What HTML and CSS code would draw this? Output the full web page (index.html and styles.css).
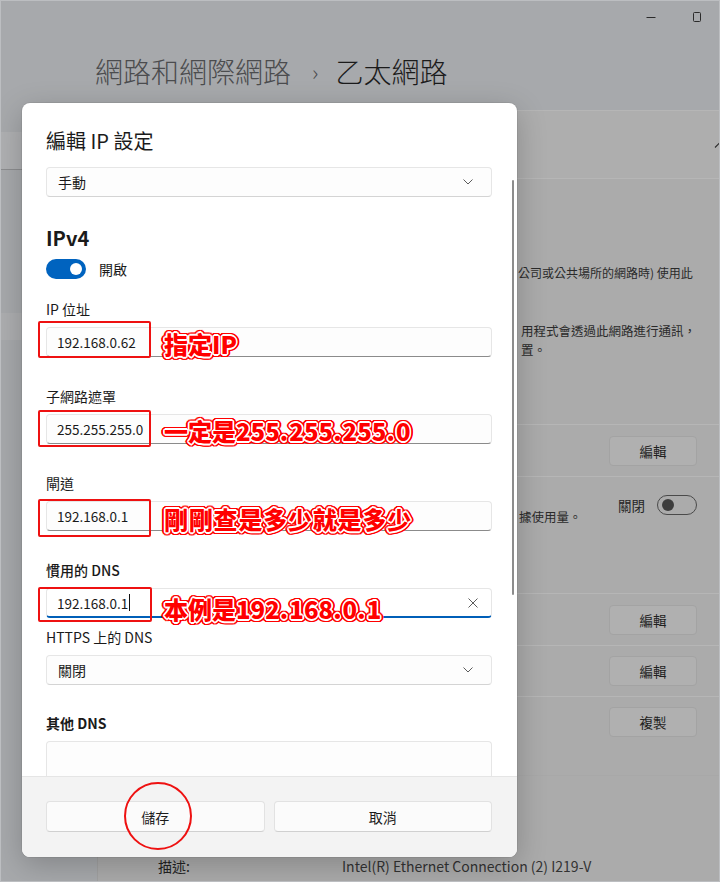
FILE: index.html
```html
<!DOCTYPE html>
<html lang="zh-Hant-TW">
<head>
  <meta charset="UTF-8">
  <meta name="viewport" content="width=device-width, initial-scale=1.0">
  <title>乙太網路</title>
  <link rel="stylesheet" href="styles.css">
</head>
<body>

<div class="window">
  <div class="titlebar">
    <svg class="ctl" width="12" height="12" viewBox="0 0 12 12"><path d="M1.5 6.5h9" stroke="#2b2b2b" stroke-width="1"/></svg>
    <svg class="ctl" width="12" height="12" viewBox="0 0 12 12"><rect x="2.5" y="1.5" width="7" height="9" rx="1" fill="none" stroke="#2b2b2b" stroke-width="1"/></svg>
  </div>

  <div class="page-head">
    <h1><span class="crumb">網路和網際網路</span><span class="sep">›</span><span class="current">乙太網路</span></h1>
  </div>

  <div class="main">
    <nav class="nav">
      <div class="search"></div>
      <div class="nav-item"></div>
    </nav>

    <div class="content">
      <div class="expander">
        <div class="expander-head">
          <svg class="chev-up" width="12" height="8" viewBox="0 0 12 8"><path d="M1 6.5l5-5 5 5" fill="none" stroke="#2b2b2b" stroke-width="1.1"/></svg>
        </div>
        <div class="expander-body">
          <div class="desc desc-top">公司或公共場所的網路時) 使用此</div>
          <div class="desc desc-mid">用程式會透過此網路進行通訊，</div>
          <div class="desc desc-end">置。</div>
        </div>
      </div>

      <div class="row"><button class="bg-btn">編輯</button></div>

      <div class="row row-tall">
        <div class="row-text">
          <div class="desc">據使用量。</div>
        </div>
        <div class="metered">
          <span>關閉</span>
          <span class="switch-off"></span>
        </div>
      </div>

      <div class="row"><button class="bg-btn">編輯</button></div>
      <div class="row row-s"><button class="bg-btn">編輯</button></div>
      <div class="row row-s"><button class="bg-btn">複製</button></div>

      <div class="props">
        <span class="prop-key">描述:</span>
        <span class="prop-val">Intel(R) Ethernet Connection (2) I219-V</span>
      </div>
    </div>
  </div>

  <!-- 編輯 IP 設定 對話方塊 -->
  <div class="dialog">
    <div class="dialog-body">
      <h2 class="dialog-title">編輯 IP 設定</h2>
      <div class="box select select-mode">
        <span>手動</span>
        <svg class="chev" width="12" height="8" viewBox="0 0 12 8"><path d="M1.5 1.5l4.5 4.5 4.5-4.5" fill="none" stroke="#5c5c5c" stroke-width="1"/></svg>
      </div>

      <h3 class="section">IPv4</h3>
      <div class="toggle-row">
        <span class="toggle"></span>
        <span>開啟</span>
      </div>

      <div class="field field-first">
        <div class="label">IP 位址</div>
        <div class="box input">
          <span>192.168.0.62</span>
          <span class="mark mark-ip"></span>
          <span class="note note-ip">指定IP</span>
        </div>
      </div>

      <div class="field">
        <div class="label">子網路遮罩</div>
        <div class="box input">
          <span>255.255.255.0</span>
          <span class="mark mark-mask"></span>
          <span class="note note-mask">一定是255<i>.</i>255<i>.</i>255<i>.</i>0</span>
        </div>
      </div>

      <div class="field">
        <div class="label">閘道</div>
        <div class="box input">
          <span>192.168.0.1</span>
          <span class="mark mark-gw"></span>
          <span class="note note-gw">剛剛查是多少就是多少</span>
        </div>
      </div>

      <div class="field">
        <div class="label label-medium">慣用的 DNS</div>
        <div class="box input focus">
          <span>192.168.0.1</span><span class="caret"></span>
          <svg class="clear" width="12" height="12" viewBox="0 0 12 12"><path d="M1.5 1.5l9 9M10.5 1.5l-9 9" stroke="#5c5c5c" stroke-width="1"/></svg>
          <span class="mark mark-dns"></span>
          <span class="note note-dns">本例是192<i>.</i>168<i>.</i>0<i>.</i>1</span>
        </div>
      </div>

      <div class="field field-tight">
        <div class="label">HTTPS 上的 DNS</div>
        <div class="box select">
          <span>關閉</span>
          <svg class="chev" width="12" height="8" viewBox="0 0 12 8"><path d="M1.5 1.5l4.5 4.5 4.5-4.5" fill="none" stroke="#5c5c5c" stroke-width="1"/></svg>
        </div>
      </div>

      <div class="field field-other">
        <div class="label label-strong">其他 DNS</div>
        <div class="box input input-cut"></div>
      </div>

      <span class="scrollbar"></span>
    </div>

    <div class="dialog-foot">
      <button class="btn">儲存<span class="circle"></span></button>
      <button class="btn">取消</button>
    </div>
  </div>
</div>

</body>
</html>
```

FILE: styles.css
```css
body {
    margin: 0;
    font-family: "Noto Sans CJK TC", "Noto Sans", sans-serif;
    background-color: #a7a9ac;
    color: #1a1a1a;
}

.window {
    position: relative;
    width: 720px;
    height: 882px;
    overflow: hidden;
    box-sizing: border-box;
    border: 1px solid #bcbec1;
}

/* 背景視窗 */
.titlebar {
    height: 31px;
    display: flex;
    justify-content: flex-end;
    align-items: center;
    gap: 34px;
    padding-right: 16px;
}

.ctl {
    display: block;
}

.page-head {
    height: 78px;
    display: flex;
    align-items: center;
    padding-left: 94px;
}

.page-head h1 {
    margin: 0;
    font-size: 28px;
    font-weight: 300;
    line-height: 40px;
    display: flex;
    align-items: center;
}

.crumb {
    color: #4b4c4e;
}

.sep {
    color: #4b4c4e;
    font-size: 22px;
    margin: 0 17px 0 21px;
}

.current {
    color: #1b1b1b;
}

.main {
    display: flex;
}

.nav {
    width: 96px;
    flex: none;
}

.search {
    margin-top: 22px;
    height: 37px;
    background-color: #afb0b2;
    border-bottom: 1px solid #8c8d8f;
}

.nav-item {
    margin-top: 143px;
    height: 27px;
    background-color: #adaeb0;
}

.content {
    flex: 1;
    background-color: #ababab;
    border-top: 1px solid #b6b6b6;
    border-left: 1px solid #a1a1a1;
    font-size: 14px;
    color: #262626;
}

.expander-head {
    height: 67px;
    background-color: #aeaeae;
    border-bottom: 1px solid #b6b6b6;
    display: flex;
    justify-content: flex-end;
    align-items: center;
}

.chev-up {
    margin-right: -7px;
}

/* 只留對話方塊右側露出的文字 */
.expander-body {
    height: 245px;
    box-sizing: border-box;
    padding-top: 84px;
    padding-left: 420px;
}

.desc {
    font-size: 12.5px;
    line-height: 19px;
    white-space: nowrap;
    color: #2a2a2a;
}

.desc-top {
    font-size: 12px;
}

.desc-mid {
    margin-top: 39px;
    padding-left: 3px;
}

.desc-end {
    padding-left: 3px;
}

.row {
    height: 52px;
    box-sizing: border-box;
    border-top: 1px solid #b6b6b6;
    display: flex;
    justify-content: flex-end;
    align-items: center;
    padding-right: 22px;
}

.row-s {
    height: 51px;
}

.row-tall {
    height: 117px;
    justify-content: space-between;
    align-items: flex-start;
}

.row-text {
    padding-top: 30px;
    padding-left: 421px;
}

.metered {
    display: flex;
    align-items: center;
    gap: 12px;
    padding-top: 18px;
    font-size: 13.5px;
}

.switch-off {
    position: relative;
    width: 40px;
    height: 20px;
    box-sizing: border-box;
    border: 1px solid #4a4a4a;
    border-radius: 10px;
}

.switch-off::after {
    content: "";
    position: absolute;
    left: 4px;
    top: 3px;
    width: 12px;
    height: 12px;
    border-radius: 50%;
    background-color: #3d3d3d;
}

.bg-btn {
    width: 88px;
    height: 30px;
    font-family: inherit;
    font-size: 13.5px;
    color: #1f1f1f;
    background-color: #b0b0b0;
    border: 1px solid #a3a3a3;
    border-radius: 4px;
}

.props {
    margin-top: 28px;
    height: 140px;
    border-top: 1px solid #a8a8a8;
    padding: 80px 0 0 60px;
    display: flex;
    font-size: 14px;
    line-height: 20px;
    color: #222;
}

.prop-key {
    width: 184px;
}

.prop-val {
    white-space: nowrap;
    color: #333;
}

/* 對話方塊 */
.dialog {
    position: absolute;
    left: 21px;
    top: 102px;
    width: 495px;
    height: 754px;
    background-color: #fff;
    border-radius: 8px;
    box-shadow: 0 8px 30px rgba(0,0,0,0.22), 0 0 0 1px rgba(0,0,0,0.06);
    display: flex;
    flex-direction: column;
    overflow: hidden;
}

.dialog-body {
    position: relative;
    flex: 1;
    min-height: 0;
    overflow: hidden;
    padding: 24px 25px 0 24px;
}

.dialog-title {
    margin: 0;
    font-size: 20px;
    font-weight: 400;
    line-height: 28px;
    color: #1b1b1b;
}

.box {
    position: relative;
    height: 30px;
    box-sizing: border-box;
    border: 1px solid #e6e6e6;
    border-radius: 4px;
    background-color: #fdfdfd;
    display: flex;
    align-items: center;
    padding: 0 10px;
    font-size: 14px;
}

.select {
    padding-left: 11px;
    justify-content: space-between;
    border-bottom-color: #d4d4d4;
}

.select-mode {
    margin-top: 12px;
}

.chev {
    margin-right: 7px;
}

.input {
    border-bottom-color: #8b8b8b;
    font-size: 13.5px;
}

.input.focus {
    background-color: #fff;
    border-bottom: 2px solid #005fb8;
}

/* 被頁尾蓋住的輸入框 */
.input-cut {
    height: 44px;
}

.caret {
    width: 1px;
    height: 17px;
    margin-left: 1px;
    background-color: #111;
}

.clear {
    position: absolute;
    right: 12px;
    top: 8px;
}

.section {
    margin: 27px 0 0;
    font-size: 20px;
    font-weight: 600;
    line-height: 28px;
}

.toggle-row {
    margin-top: 7px;
    display: flex;
    align-items: center;
    gap: 13px;
    font-size: 14px;
    height: 20px;
}

.toggle {
    position: relative;
    width: 40px;
    height: 20px;
    border-radius: 10px;
    background-color: #0063bf;
}

.toggle::after {
    content: "";
    position: absolute;
    right: 4px;
    top: 4px;
    width: 12px;
    height: 12px;
    border-radius: 50%;
    background-color: #fff;
}

.field {
    margin-top: 29px;
}

.field-first {
    margin-top: 20px;
}

.field-tight {
    margin-top: 9px;
}

.field-other {
    margin-top: 28px;
}

.label {
    font-size: 14px;
    line-height: 20px;
    margin-bottom: 8px;
}

.label-medium {
    font-weight: 500;
}

.label-strong {
    font-weight: 600;
}

.scrollbar {
    position: absolute;
    left: 490px;
    top: 77px;
    width: 2px;
    height: 415px;
    border-radius: 1px;
    background-color: #8c8c8c;
}

/* 紅色標註 */
.mark {
    position: absolute;
    left: -9px;
    width: 109px;
    border: 2px solid #ee1111;
    border-radius: 2px;
}

.mark-ip {
    top: -7px;
    height: 33px;
}

.mark-mask {
    top: -5px;
    height: 33px;
}

.mark-gw {
    top: -3px;
    height: 34px;
}

.mark-dns {
    top: -2px;
    height: 31px;
    width: 110px;
}

.note {
    position: absolute;
    left: 117px;
    z-index: 2;
    font-size: 24px;
    font-weight: 900;
    line-height: 30px;
    white-space: nowrap;
    color: #ff0000;
    text-shadow:
        1.6px 0 #fff, -1.6px 0 #fff, 0 1.6px #fff, 0 -1.6px #fff,
        1.2px 1.2px #fff, -1.2px 1.2px #fff, 1.2px -1.2px #fff, -1.2px -1.2px #fff,
        3.4px 0 #f00, -3.4px 0 #f00, 0 3.4px #f00, 0 -3.4px #f00,
        2.4px 2.4px #f00, -2.4px 2.4px #f00, 2.4px -2.4px #f00, -2.4px -2.4px #f00,
        3.1px 1.3px #f00, -3.1px 1.3px #f00, 3.1px -1.3px #f00, -3.1px -1.3px #f00,
        1.3px 3.1px #f00, -1.3px 3.1px #f00, 1.3px -3.1px #f00, -1.3px -3.1px #f00;
}

.note i {
    font-style: normal;
    margin: 0 1px 0 0;
}

.note-ip {
    top: 1px;
}

.note-mask {
    top: 1px;
}

.note-gw {
    top: 2px;
    letter-spacing: 0.8px;
}

.note-dns {
    top: 5px;
}

.dialog-foot {
    flex: none;
    height: 81px;
    box-sizing: border-box;
    background-color: #f3f3f3;
    border-top: 1px solid #e5e5e5;
    padding: 24px 25px 0 24px;
    display: flex;
    gap: 9px;
}

.btn {
    position: relative;
    flex: 1;
    height: 31px;
    font-family: inherit;
    font-size: 14px;
    color: #1b1b1b;
    background-color: #fbfbfb;
    border: 1px solid #e2e2e2;
    border-bottom-color: #d0d0d0;
    border-radius: 4px;
}

.circle {
    position: absolute;
    left: 77px;
    top: -20px;
    width: 64px;
    height: 64px;
    border: 2px solid #ee1111;
    border-radius: 50%;
}
```
